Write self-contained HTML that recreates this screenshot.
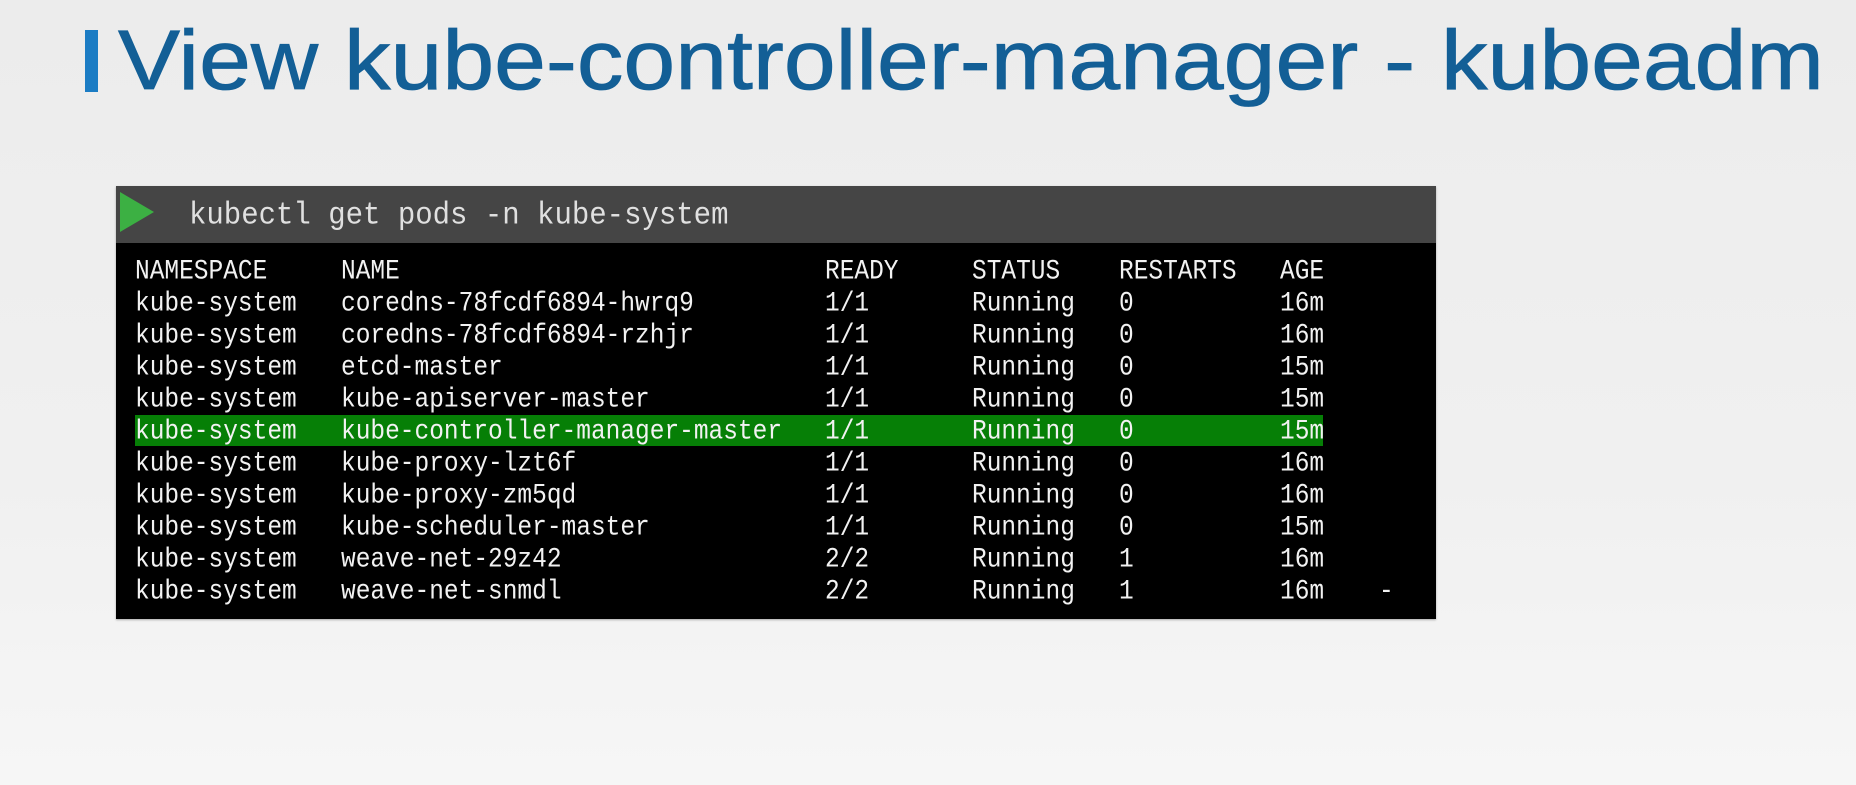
<!DOCTYPE html>
<html><head><meta charset="utf-8"><style>
html,body{margin:0;padding:0;}
body{width:1856px;height:785px;position:relative;overflow:hidden;background:linear-gradient(#ececec,#f0f0f0 60%,#f6f6f6);font-family:"Liberation Sans",sans-serif;}
.bar{position:absolute;left:85px;top:30px;width:13px;height:62px;background:#1b7cc4;}
.term{position:absolute;left:116px;top:186px;width:1320px;height:433px;background:#000;box-shadow:0 1px 2px rgba(0,0,0,.3);}
.hdr{position:absolute;left:0;top:0;width:1320px;height:57px;background:#454545;}
.cmd{position:absolute;left:189px;top:200px;font-family:"Liberation Mono",monospace;font-size:29px;color:#e0e0e0;line-height:32px;white-space:pre;transform:scaleY(1.1);transform-origin:0 50%;}
.row{position:absolute;left:135px;height:32px;line-height:32px;font-family:"Liberation Mono",monospace;font-size:24.5px;color:#f2f2f2;white-space:pre;}
.row span{position:absolute;top:0;transform:scaleY(1.12);transform-origin:0 50%;}
.hl{position:absolute;left:135px;top:415px;width:1188px;height:31px;background:#067f06;}
</style></head><body>
<div class="bar"></div>
<svg style="position:absolute;left:0;top:0" width="1856" height="120"><text x="118" y="89" font-family="Liberation Sans, sans-serif" font-size="84" fill="#135f96" stroke="#135f96" stroke-width="0.8" textLength="1706" lengthAdjust="spacingAndGlyphs">View kube-controller-manager - kubeadm</text></svg>
<div class="term"><div class="hdr"></div></div>
<svg style="position:absolute;left:120px;top:192px" width="34" height="40"><polygon points="0,0 34,20 0,40" fill="#3cb043"/></svg>
<div class="cmd">kubectl get pods -n kube-system</div>
<div class="hl"></div>
<div class="row" style="top:257px"><span style="left:0">NAMESPACE</span><span style="left:206px">NAME</span><span style="left:690px">READY</span><span style="left:837px">STATUS</span><span style="left:984px">RESTARTS</span><span style="left:1145px">AGE</span></div>
<div class="row" style="top:289px"><span style="left:0">kube-system</span><span style="left:206px">coredns-78fcdf6894-hwrq9</span><span style="left:690px">1/1</span><span style="left:837px">Running</span><span style="left:984px">0</span><span style="left:1145px">16m</span></div>
<div class="row" style="top:321px"><span style="left:0">kube-system</span><span style="left:206px">coredns-78fcdf6894-rzhjr</span><span style="left:690px">1/1</span><span style="left:837px">Running</span><span style="left:984px">0</span><span style="left:1145px">16m</span></div>
<div class="row" style="top:353px"><span style="left:0">kube-system</span><span style="left:206px">etcd-master</span><span style="left:690px">1/1</span><span style="left:837px">Running</span><span style="left:984px">0</span><span style="left:1145px">15m</span></div>
<div class="row" style="top:385px"><span style="left:0">kube-system</span><span style="left:206px">kube-apiserver-master</span><span style="left:690px">1/1</span><span style="left:837px">Running</span><span style="left:984px">0</span><span style="left:1145px">15m</span></div>
<div class="row" style="top:417px"><span style="left:0">kube-system</span><span style="left:206px">kube-controller-manager-master</span><span style="left:690px">1/1</span><span style="left:837px">Running</span><span style="left:984px">0</span><span style="left:1145px">15m</span></div>
<div class="row" style="top:449px"><span style="left:0">kube-system</span><span style="left:206px">kube-proxy-lzt6f</span><span style="left:690px">1/1</span><span style="left:837px">Running</span><span style="left:984px">0</span><span style="left:1145px">16m</span></div>
<div class="row" style="top:481px"><span style="left:0">kube-system</span><span style="left:206px">kube-proxy-zm5qd</span><span style="left:690px">1/1</span><span style="left:837px">Running</span><span style="left:984px">0</span><span style="left:1145px">16m</span></div>
<div class="row" style="top:513px"><span style="left:0">kube-system</span><span style="left:206px">kube-scheduler-master</span><span style="left:690px">1/1</span><span style="left:837px">Running</span><span style="left:984px">0</span><span style="left:1145px">15m</span></div>
<div class="row" style="top:545px"><span style="left:0">kube-system</span><span style="left:206px">weave-net-29z42</span><span style="left:690px">2/2</span><span style="left:837px">Running</span><span style="left:984px">1</span><span style="left:1145px">16m</span></div>
<div class="row" style="top:577px"><span style="left:0">kube-system</span><span style="left:206px">weave-net-snmdl</span><span style="left:690px">2/2</span><span style="left:837px">Running</span><span style="left:984px">1</span><span style="left:1145px">16m</span><span style="left:1244px">-</span></div>
</body></html>
